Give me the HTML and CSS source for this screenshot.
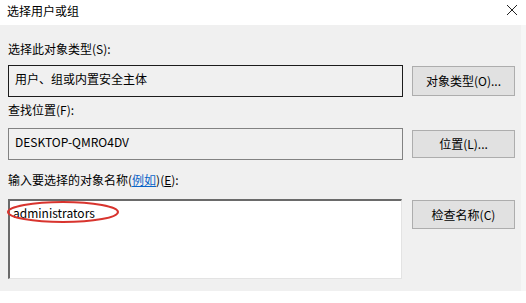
FILE: index.html
```html
<!DOCTYPE html>
<html lang="zh-CN">
<head>
<meta charset="utf-8">
<title>选择用户或组</title>
<link rel="stylesheet" href="styles.css">
</head>
<body>
<div class="window">
  <div class="titlebar">
    <span class="title">选择用户或组</span>
    <svg class="close" width="12" height="12" viewBox="0 0 12 12"><path d="M1 1 L11 11 M11 1 L1 11" stroke="#222" stroke-width="1" fill="none"/></svg>
  </div>
  <div class="body">
    <div class="label l1">选择此对象类型(S):</div>
    <div class="row r1">
      <div class="field dark">用户、组或内置安全主体</div>
      <div class="btn">对象类型(O)...</div>
    </div>
    <div class="label l2">查找位置(F):</div>
    <div class="row r2">
      <div class="field gray">DESKTOP-QMRO4DV</div>
      <div class="btn">位置(L)...</div>
    </div>
    <div class="label l3">输入要选择的对象名称(<span class="link">例如</span>)(<u>E</u>):</div>
    <div class="row r3">
      <div class="field edit">
        <span class="entry">administrators</span>
        <svg class="mark" width="118" height="26" viewBox="0 0 118 26"><ellipse cx="58" cy="12" rx="55" ry="10" fill="none" stroke="#d8342e" stroke-width="2"/></svg>
      </div>
      <div class="btn">检查名称(C)</div>
    </div>
  </div>
  <div class="footer"></div>
</div>
</body>
</html>
```

FILE: styles.css
```css
html, body {
  margin: 0;
  padding: 0;
  background: #ffffff;
}
.window {
  width: 526px;
  height: 303px;
  overflow: hidden;
  font-family: "Noto Sans CJK SC", "Noto Sans", sans-serif;
  font-size: 12px;
  color: #000;
}
.titlebar {
  height: 25px;
  background: #ffffff;
  display: flex;
  align-items: center;
  justify-content: space-between;
  padding: 0 8px 3px 7px;
  box-sizing: border-box;
}
.title {
  line-height: 16px;
}
.close {
  margin-top: -2px;
}
.body {
  background: #f0f0f0;
  padding: 16px 6px 12px 8px;
  border-right: 5px solid #f6f6f6;
}
.label {
  line-height: 16px;
  height: 16px;
}
.l2 { margin-top: 5px; }
.l3 { margin-top: 12px; }
.link {
  color: #0a64c8;
  text-decoration: underline;
}
.row {
  display: flex;
  align-items: center;
  gap: 9px;
}
.r1 { margin-top: 8px; }
.r2 { margin-top: 10px; }
.r3 { margin-top: 11px; align-items: flex-start; }
.field {
  width: 395px;
  flex: none;
  box-sizing: border-box;
  line-height: 16px;
  padding: 5px 6px;
}
.dark {
  height: 32px;
  border: 1px solid #1c1c1c;
  background: #f0f0f0;
}
.gray {
  height: 32px;
  border: 1px solid #828282;
  background: #f0f0f0;
}
.edit {
  position: relative;
  height: 80px;
  background: #ffffff;
  border-top: 2px solid #6a6a6a;
  border-left: 2px solid #6a6a6a;
  border-right: 1px solid #e3e3e3;
  border-bottom: 1px solid #e3e3e3;
  padding: 4px 3px;
  width: 394px;
}
.r3 .btn { margin-left: 1px; }
.mark {
  position: absolute;
  left: -5px;
  top: -1px;
}
.btn {
  flex: none;
  width: 103px;
  height: 30px;
  box-sizing: border-box;
  background: #e1e1e1;
  border: 1px solid #adadad;
  display: flex;
  align-items: center;
  justify-content: center;
  line-height: 16px;
}
.r2 .btn { height: 28px; }
.r3 .btn { height: 29px; margin-top: 1px; }
.footer {
  height: 12px;
  background: #ffffff;
}
```
